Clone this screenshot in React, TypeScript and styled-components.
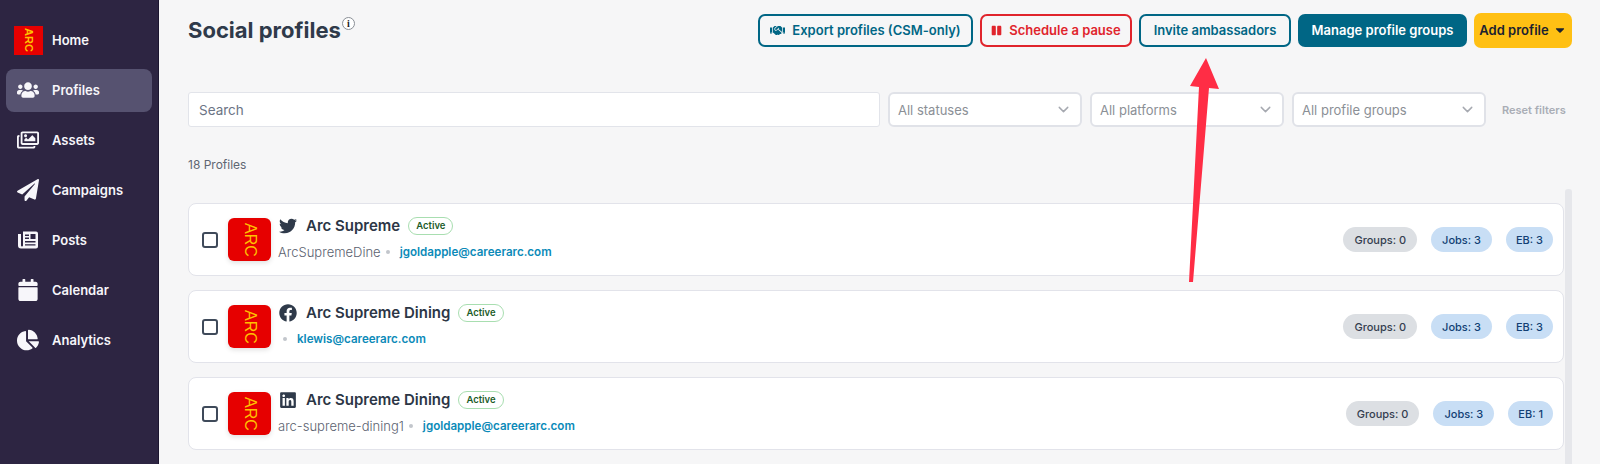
import { ReactNode } from "react";
import styled, { createGlobalStyle } from "styled-components";
import {
  FaCalendar,
  FaCaretDown,
  FaChartPie,
  FaFacebook,
  FaHandshake,
  FaLinkedin,
  FaPaperPlane,
  FaPause,
  FaRegImages,
  FaTwitter,
  FaUsers
} from "react-icons/fa";
import { FiChevronDown } from "react-icons/fi";

const GlobalStyle = createGlobalStyle`
  html, body {
    margin: 0;
    height: 100%;
    background: #f6f6f7;
    overflow: hidden;
    font-family: Inter, "Open Sans", "Liberation Sans", sans-serif;
  }
  * {
    box-sizing: border-box;
  }
`;

const Page = styled.div`
  position: relative;
  display: flex;
  width: 1600px;
  height: 464px;
  overflow: hidden;
`;

const Sidebar = styled.nav`
  width: 159px;
  flex-shrink: 0;
  display: flex;
  flex-direction: column;
  gap: 7px;
  padding: 19px 6px 0;
  background: #2d2542;
  border-right: 1px solid #1c1630;
`;

const NavItem = styled.a<{ $active?: boolean }>`
  display: flex;
  align-items: center;
  height: 43px;
  padding-bottom: 1px;
  border-radius: 8px;
  color: #f7f6fa;
  font-size: 13px;
  font-weight: 600;
  background: ${(props) => (props.$active ? "#565270" : "transparent")};
`;

const NavIcon = styled.span`
  width: 44px;
  margin-right: 2px;
  display: flex;
  justify-content: center;
  flex-shrink: 0;
  font-size: 22px;
  color: #f7f6fa;
`;

const LogoBox = styled.span<{ $size: number; $radius: number }>`
  display: flex;
  align-items: center;
  justify-content: center;
  flex-shrink: 0;
  width: ${(props) => props.$size}px;
  height: ${(props) => props.$size}px;
  border-radius: ${(props) => props.$radius}px;
  background: #e60000;
  color: #ffc000;
  font-family: "Liberation Sans", sans-serif;
  font-size: ${(props) => Math.round(props.$size * 0.38)}px;
  line-height: 1;
  writing-mode: vertical-rl;
`;

const Main = styled.main`
  flex: 1;
  min-width: 0;
  display: flex;
  flex-direction: column;
  padding: 13px 28px 0 29px;
`;

const HeaderRow = styled.header`
  display: flex;
  align-items: center;
  height: 34px;
`;

const Title = styled.h1`
  margin: 0;
  font-size: 22px;
  font-weight: 700;
  color: #2f3a4a;
`;

const InfoMark = styled.span`
  display: flex;
  align-items: center;
  justify-content: center;
  align-self: flex-start;
  width: 13px;
  height: 13px;
  margin: 4px 0 0 1px;
  border: 1px solid #8a8f96;
  border-radius: 50%;
  background: #fff;
  color: #222;
  font-family: "Liberation Serif", serif;
  font-size: 10px;
  font-weight: 700;
`;

const Actions = styled.div`
  display: flex;
  align-items: center;
  gap: 7px;
  margin-left: auto;
`;

const ActionButton = styled.button<{
  $variant: "outline" | "danger" | "solid" | "yellow";
  $width: number;
}>`
  display: flex;
  align-items: center;
  justify-content: center;
  gap: ${(props) => (props.$variant === "yellow" ? 4 : 7)}px;
  width: ${(props) => props.$width}px;
  height: ${(props) => (props.$variant === "yellow" ? 35 : 33)}px;
  padding: 0;
  border-radius: 7px;
  font-family: inherit;
  font-size: 13px;
  font-weight: 600;
  border: ${(props) =>
    props.$variant === "danger"
      ? "2px solid #e0242c"
      : props.$variant === "outline"
        ? "2px solid #006685"
        : "none"};
  color: ${(props) =>
    props.$variant === "danger"
      ? "#e0242c"
      : props.$variant === "outline"
        ? "#006685"
        : props.$variant === "solid"
          ? "#fff"
          : "#1b2230"};
  background: ${(props) =>
    props.$variant === "solid"
      ? "#006685"
      : props.$variant === "yellow"
        ? "#ffc014"
        : "transparent"};
`;

const FilterRow = styled.div`
  display: flex;
  align-items: center;
  gap: 8px;
  height: 35px;
  margin-top: 45px;
`;

const SearchBox = styled.div`
  flex: 1;
  height: 35px;
  display: flex;
  align-items: center;
  padding-left: 10px;
  background: #fff;
  border: 1px solid #e2e4ea;
  border-radius: 3px;
  color: #6b7485;
  font-size: 13.5px;
`;

const SelectBox = styled.div`
  width: 194px;
  height: 35px;
  flex-shrink: 0;
  display: flex;
  align-items: center;
  justify-content: space-between;
  padding: 0 8px;
  background: #fff;
  border: 2px solid #e0e2e8;
  border-radius: 6px;
  color: #8b8f96;
  font-size: 13px;
  svg {
    color: #a6a9b0;
    font-size: 17px;
  }
`;

const ResetLink = styled.span`
  width: 63px;
  margin: 0 7px 0 8px;
  flex-shrink: 0;
  color: #a9adb5;
  font-size: 11px;
  font-weight: 600;
  white-space: nowrap;
`;

const ProfileCount = styled.div`
  margin-top: 30px;
  height: 16px;
  line-height: 16px;
  color: #5f6672;
  font-size: 12px;
`;

const ListArea = styled.div`
  flex: 1;
  display: flex;
  margin-top: 16px;
  min-height: 0;
`;

const CardList = styled.div`
  flex: 1;
  display: flex;
  flex-direction: column;
  gap: 14px;
  padding-top: 14px;
`;

const ScrollTrack = styled.div`
  width: 7px;
  margin-left: 1px;
  flex-shrink: 0;
  background: #e6e7eb;
  border-radius: 3px 3px 0 0;
`;

const Card = styled.article`
  display: flex;
  align-items: center;
  height: 73px;
  padding: 0 10px 0 13px;
  background: #fff;
  border: 1px solid #e2e3ea;
  border-radius: 8px;
`;

const Checkbox = styled.span`
  width: 16px;
  height: 16px;
  flex-shrink: 0;
  margin-right: 10px;
  border: 2px solid #3f4a5a;
  border-radius: 3px;
  background: #fff;
`;

const CardLogo = styled(LogoBox)`
  box-shadow: 0 2px 5px rgba(0, 0, 0, 0.12);
`;

const Details = styled.div`
  display: flex;
  flex-direction: column;
  gap: 7px;
  margin-left: 7px;
  padding-bottom: 3px;
`;

const NameRow = styled.div`
  display: flex;
  align-items: center;
  height: 20px;
  padding-left: 1px;
`;

const PlatformIcon = styled.span`
  width: 27px;
  flex-shrink: 0;
  font-size: 18px;
  line-height: 1;
  color: #2f3a4a;
  svg {
    display: block;
  }
`;

const ProfileName = styled.span`
  font-size: 15px;
  font-weight: 600;
  color: #2c3646;
`;

const StatusBadge = styled.span`
  display: flex;
  align-items: center;
  height: 18px;
  margin-left: 8px;
  padding: 0 7px;
  border: 1px solid #a8deb0;
  border-radius: 9px;
  color: #1d5c2a;
  font-size: 9.5px;
  font-weight: 600;
`;

const SubRow = styled.div`
  display: flex;
  align-items: center;
  height: 18px;
`;

const Handle = styled.span`
  color: #5b6270;
  font-size: 13px;
  font-weight: 300;
`;

const Dot = styled.span`
  width: 4px;
  height: 4px;
  margin: 0 10px 0 5px;
  border-radius: 50%;
  background: #c2c6cc;
`;

const Email = styled.a`
  color: #0b8ab8;
  font-size: 11.6px;
  font-weight: 600;
`;

const Pills = styled.div`
  display: flex;
  gap: 14px;
  margin-left: auto;
`;

const Pill = styled.span<{ $tone: "gray" | "blue"; $pad: number }>`
  display: flex;
  align-items: center;
  height: 25px;
  padding: 0 ${(props) => props.$pad}px;
  border-radius: 13px;
  font-size: 11px;
  font-weight: 500;
  color: ${(props) => (props.$tone === "gray" ? "#343e4f" : "#123f74")};
  background: ${(props) => (props.$tone === "gray" ? "#dcdfe3" : "#c8def5")};
`;

const ArrowOverlay = styled.svg`
  position: absolute;
  left: 1180px;
  top: 50px;
  pointer-events: none;
`;

type Profile = {
  icon: ReactNode;
  name: string;
  handle: string;
  email: string;
  eb: number;
};

// the fa newspaper has its picture on the left, the one here has it top right
function PostsIcon() {
  return (
    <svg width="20" height="20" viewBox="0 0 20 20">
      <path
        d="M5 1.5h13a2 2 0 0 1 2 2v13a2 2 0 0 1-2 2H3a3 3 0 0 1-3-3V4h3v11.5a1 1 0 0 0 2 0Z"
        fill="#f7f6fa"
      />
      <path
        d="M7 4.5h4v1.4H7ZM7 7.5h4v1.4H7ZM12.5 4h5v5h-5ZM7 11h10.5v1.4H7ZM7 14.2h10.5v1.4H7Z"
        fill="#2d2542"
      />
    </svg>
  );
}

const navItems = [
  { label: "Profiles", icon: <FaUsers />, active: true },
  { label: "Assets", icon: <FaRegImages /> },
  { label: "Campaigns", icon: <FaPaperPlane /> },
  { label: "Posts", icon: <PostsIcon /> },
  { label: "Calendar", icon: <FaCalendar /> },
  { label: "Analytics", icon: <FaChartPie /> }
];

const profiles: Profile[] = [
  {
    icon: <FaTwitter />,
    name: "Arc Supreme",
    handle: "ArcSupremeDine",
    email: "jgoldapple@careerarc.com",
    eb: 3
  },
  {
    icon: <FaFacebook />,
    name: "Arc Supreme Dining",
    handle: "",
    email: "klewis@careerarc.com",
    eb: 3
  },
  {
    icon: <FaLinkedin />,
    name: "Arc Supreme Dining",
    handle: "arc-supreme-dining1",
    email: "jgoldapple@careerarc.com",
    eb: 1
  }
];

export default function App() {
  return (
    <Page>
      <GlobalStyle />
      <Sidebar>
        <NavItem>
          <NavIcon>
            <LogoBox $size={29} $radius={0}>
              ARC
            </LogoBox>
          </NavIcon>
          Home
        </NavItem>
        {navItems.map((item) => (
          <NavItem key={item.label} $active={item.active}>
            <NavIcon>{item.icon}</NavIcon>
            {item.label}
          </NavItem>
        ))}
      </Sidebar>
      <Main>
        <HeaderRow>
          <Title>Social profiles</Title>
          <InfoMark>i</InfoMark>
          <Actions>
            <ActionButton $variant="outline" $width={215}>
              <FaHandshake size={15} />
              Export profiles (CSM-only)
            </ActionButton>
            <ActionButton $variant="danger" $width={152}>
              <FaPause size={11} />
              Schedule a pause
            </ActionButton>
            <ActionButton $variant="outline" $width={152}>
              Invite ambassadors
            </ActionButton>
            <ActionButton $variant="solid" $width={169}>
              Manage profile groups
            </ActionButton>
            <ActionButton $variant="yellow" $width={98}>
              Add profile
              <FaCaretDown size={14} />
            </ActionButton>
          </Actions>
        </HeaderRow>
        <FilterRow>
          <SearchBox>Search</SearchBox>
          <SelectBox>
            All statuses
            <FiChevronDown />
          </SelectBox>
          <SelectBox>
            All platforms
            <FiChevronDown />
          </SelectBox>
          <SelectBox>
            All profile groups
            <FiChevronDown />
          </SelectBox>
          <ResetLink>Reset filters</ResetLink>
        </FilterRow>
        <ProfileCount>18 Profiles</ProfileCount>
        <ListArea>
          <CardList>
            {profiles.map((profile) => (
              <Card key={profile.name + profile.email}>
                <Checkbox />
                <CardLogo $size={43} $radius={6}>
                  ARC
                </CardLogo>
                <Details>
                  <NameRow>
                    <PlatformIcon>{profile.icon}</PlatformIcon>
                    <ProfileName>{profile.name}</ProfileName>
                    <StatusBadge>Active</StatusBadge>
                  </NameRow>
                  <SubRow>
                    <Handle>{profile.handle}</Handle>
                    <Dot />
                    <Email>{profile.email}</Email>
                  </SubRow>
                </Details>
                <Pills>
                  <Pill $tone="gray" $pad={11}>
                    Groups: 0
                  </Pill>
                  <Pill $tone="blue" $pad={11}>
                    Jobs: 3
                  </Pill>
                  <Pill $tone="blue" $pad={10}>
                    EB: {profile.eb}
                  </Pill>
                </Pills>
              </Card>
            ))}
          </CardList>
          <ScrollTrack />
        </ListArea>
      </Main>
      <ArrowOverlay width="50" height="240" viewBox="0 0 50 240">
        <path
          d="M26 8 L39 39 L29 38 L13 232 L9 232 L19 37 L10 36 Z"
          fill="#ff2d45"
        />
      </ArrowOverlay>
    </Page>
  );
}
